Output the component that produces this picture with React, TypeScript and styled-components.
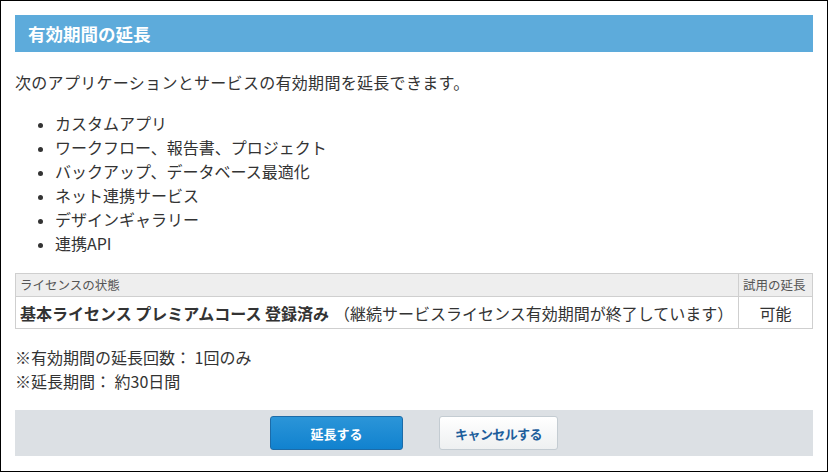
import React from 'react';
import styled, { createGlobalStyle } from 'styled-components';

const GlobalStyle = createGlobalStyle`
  html, body {
    margin: 0;
    padding: 0;
    background: #fff;
  }
  body {
    font-family: "Noto Sans CJK JP", "Noto Sans", "Liberation Sans", sans-serif;
    color: #333;
  }
`;

const Frame = styled.div`
  box-sizing: border-box;
  width: 828px;
  height: 472px;
  border: 1px solid #000;
  padding: 14px 14px 0;
  overflow: hidden;
`;

const TitleBar = styled.h1`
  margin: 0;
  height: 37px;
  background: #5dabdb;
  color: #fff;
  font-size: 17.5px;
  font-weight: 700;
  line-height: 37px;
  padding: 0 13px;
`;

const Intro = styled.p`
  margin: 18px 0 0;
  font-size: 16px;
  line-height: 24px;
  letter-spacing: 0.3px;
`;

const Features = styled.ul`
  margin: 17px 0 0;
  padding-left: 40px;
  font-size: 16px;
  line-height: 24px;
  li::marker {
    font-size: 14px;
  }
`;

const LicenseTable = styled.table`
  margin-top: 18px;
  width: 100%;
  border-collapse: collapse;
  th,
  td {
    border: 1px solid #cfcfcf;
    white-space: nowrap;
  }
  th {
    background: #eeeeee;
    color: #555;
    font-size: 12.5px;
    font-weight: 400;
    height: 22px;
    padding: 0 4px;
    text-align: left;
    line-height: 22px;
  }
  td {
    height: 31px;
    padding: 0 4px;
    font-size: 16px;
    line-height: 20px;
  }
`;

const StatusCell = styled.td`
  b {
    font-weight: 700;
    margin-right: 5px;
  }
`;

const ResultCell = styled.td`
  width: 65px;
  text-align: center;
`;

const Notes = styled.div`
  margin-top: 16px;
  font-size: 16px;
  line-height: 24px;
`;

const Footer = styled.div`
  margin-top: 17px;
  height: 46px;
  background: #dce0e4;
  display: flex;
  justify-content: center;
  align-items: center;
  gap: 36px;
`;

const Button = styled.button<{ $primary?: boolean }>`
  box-sizing: border-box;
  height: 34px;
  width: ${(p) => (p.$primary ? '133px' : '119px')};
  border-radius: 3px;
  font-family: inherit;
  font-size: 13px;
  font-weight: 700;
  letter-spacing: ${(p) => (p.$primary ? '0' : '-0.6px')};
  cursor: pointer;
  border: 1px solid ${(p) => (p.$primary ? '#1c6ba8' : '#c4ccd2')};
  color: ${(p) => (p.$primary ? '#fff' : '#1d5e9c')};
  background: ${(p) =>
    p.$primary
      ? 'linear-gradient(#2b95d8, #1182cf)'
      : 'linear-gradient(#ffffff, #eef0f1)'};
`;

const features = [
  'カスタムアプリ',
  'ワークフロー、報告書、プロジェクト',
  'バックアップ、データベース最適化',
  'ネット連携サービス',
  'デザインギャラリー',
  '連携API',
];

export default function App() {
  return (
    <>
      <GlobalStyle />
      <Frame>
        <TitleBar>有効期間の延長</TitleBar>
        <Intro>次のアプリケーションとサービスの有効期間を延長できます。</Intro>
        <Features>
          {features.map((f) => (
            <li key={f}>{f}</li>
          ))}
        </Features>
        <LicenseTable>
          <thead>
            <tr>
              <th>ライセンスの状態</th>
              <th>試用の延長</th>
            </tr>
          </thead>
          <tbody>
            <tr>
              <StatusCell>
                <b>基本ライセンス プレミアムコース 登録済み</b>（継続サービスライセンス有効期間が終了しています）
              </StatusCell>
              <ResultCell>可能</ResultCell>
            </tr>
          </tbody>
        </LicenseTable>
        <Notes>
          <div>※有効期間の延長回数： 1回のみ</div>
          <div>※延長期間： 約30日間</div>
        </Notes>
        <Footer>
          <Button $primary>延長する</Button>
          <Button>キャンセルする</Button>
        </Footer>
      </Frame>
    </>
  );
}
